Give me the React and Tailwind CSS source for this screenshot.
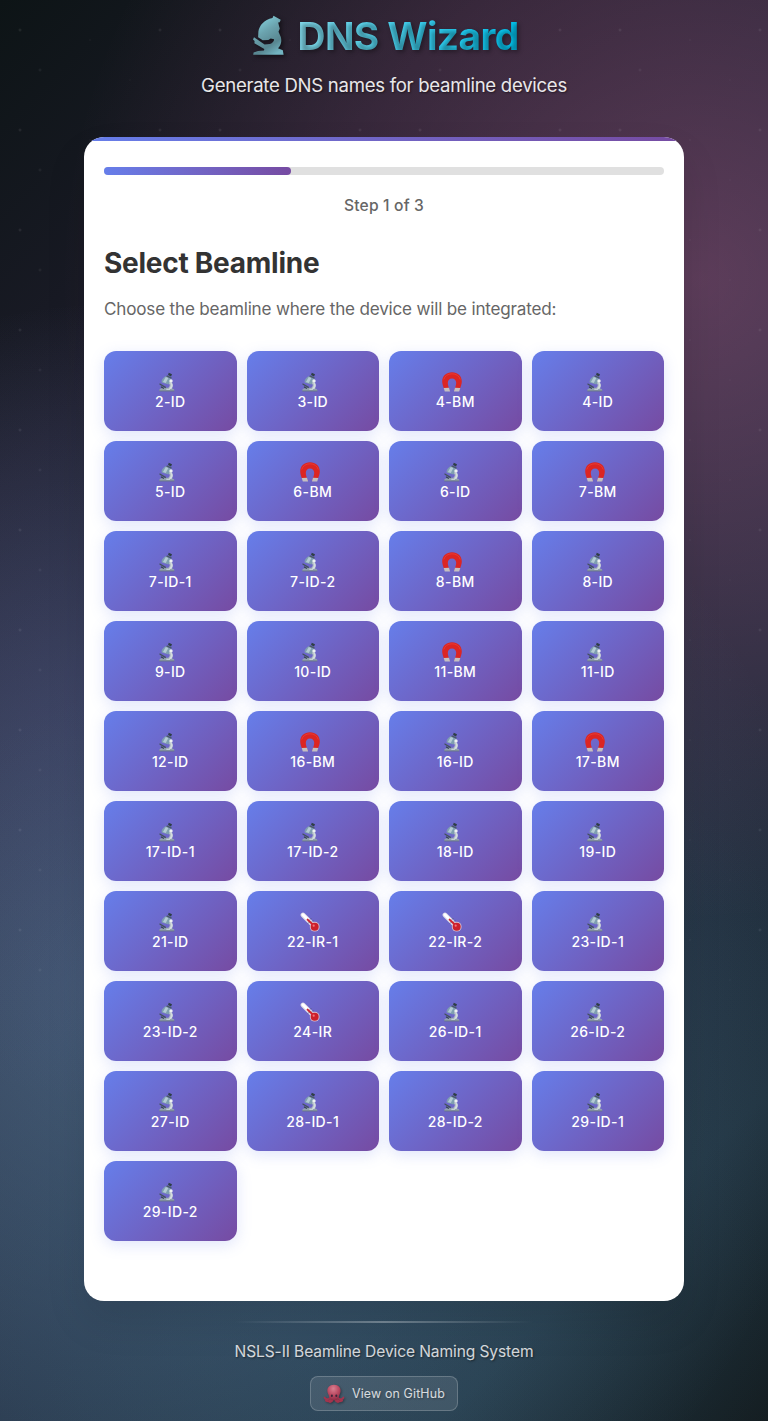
import React from "react";

const BEAMLINES = [
  "2-ID", "3-ID", "4-BM", "4-ID", "5-ID", "6-BM", "6-ID", "7-BM", "7-ID-1", "7-ID-2", "8-BM", "8-ID",
  "9-ID", "10-ID", "11-BM", "11-ID", "12-ID", "16-BM", "16-ID", "17-BM", "17-ID-1", "17-ID-2", "18-ID", "19-ID",
  "21-ID", "22-IR-1", "22-IR-2", "23-ID-1", "23-ID-2", "24-IR", "26-ID-1", "26-ID-2", "27-ID", "28-ID-1", "28-ID-2", "29-ID-1",
  "29-ID-2",
];

function Microscope() {
  return (
    <svg viewBox="0 0 20 20" className="block size-5">
      <path d="M11.500 8.500c4.400 1 5.600 5 2.200 8.600l-3.700-.2c2.800-1.600 3.800-4.400 1.500-6z" fill="#b4c0c6" />
      <path d="M2.600 17l3.600-1.200h8l3 1.600v1.500H2.400z" fill="#93a2b0" />
      <path d="M2.300 18.500h15v.9h-15z" fill="#687785" />
      <path d="M2.700 11.200l6.500 3.800-.8 1.300-6-3.800z" fill="#43535c" />
      <path d="M4 14.300l3.200 1.700-.5.900-2.800-1.500z" fill="#35444c" />
      <path d="M8.700 4.200l5.400 2.500-2.600 5.800-6.800-2c-.6-2.600 1.400-5 4-6.300z" fill="#7f9fb1" />
      <path d="M8.800 5l2.500 1.100-2.500 5-2.900-1z" fill="#b4cbd4" />
      <path d="M10 3.200l4.800 2.200-.6 1.300-4.900-2.200z" fill="#4b5c64" />
      <path d="M11.800.7l3.200 1.500-1 2.300-3-1.500z" fill="#2e3e44" />
      <circle cx="14" cy="8.900" r="1.700" fill="#eef2f3" />
      <path d="M14.300 10.400c2.300 2 1.700 4.900-.2 6.600l-2.300-.3c2.200-1.700 2.900-3.900 1.500-5.700z" fill="#d4dde0" />
      <path d="M9.500 16.700H13v1H9.200z" fill="#d3dce0" />
    </svg>
  );
}

function Magnet() {
  return (
    <svg viewBox="0 0 20 20" className="block size-5">
      <path d="M3.300 19C1 15 .2 11.500.2 9.400.200 4 4.400.3 10 .3s9.800 3.700 9.800 9.100c0 2.100-.8 5.600-3.100 9.600h-4.600c1.300-3.500 2.100-6 2.100-8.200 0-2.800-1.700-4.400-4.200-4.400s-4.200 1.600-4.200 4.400c0 2.200.8 4.700 2.100 8.200z" fill="#dc2523" />
      <path d="M1.700 7.500C2.700 4 5.800 1.800 10 1.800s7.300 2.200 8.300 5.700" fill="none" stroke="#e83a32" strokeWidth="1" />
      <path d="M1.700 16l5.300-.3 1 3.300-.1.600H2.800zM18.300 16l-5.300-.3-1 3.300.1.600h5.100z" fill="#c3bfc2" />
    </svg>
  );
}

function Thermometer() {
  return (
    <svg viewBox="0 0 20 20" className="block size-5">
      <path d="M3 3l10.500 10.500" stroke="#dedae6" strokeWidth="4.700" strokeLinecap="round" />
      <path d="M3 2.800l5 5" stroke="#fff" strokeWidth="3" strokeLinecap="round" />
      <circle cx="14.700" cy="14.700" r="4.900" fill="#d5bfd0" />
      <circle cx="14.700" cy="14.700" r="4" fill="#cb202c" />
      <path d="M7.600 7.600l7.500 7.200" stroke="#d1202c" strokeWidth="2" strokeLinecap="round" />
      <path d="M8 11.500l1.200-1.200M10 7.500l1.200-1.200M12 9.600l1.200-1.200" stroke="#55516f" strokeWidth=".9" />
      <circle cx="13.700" cy="13.700" r="1.100" fill="#f0757a" />
    </svg>
  );
}

function Octopus() {
  return (
    <svg viewBox="0 0 20 20" className="block size-5 overflow-visible drop-shadow-[1px_1px_1px_rgba(0,0,0,0.35)]">
      <defs>
        <radialGradient id="head" cx="45%" cy="25%" r="75%">
          <stop offset="0" stopColor="#d87f90" />
          <stop offset=".55" stopColor="#bb4a62" />
          <stop offset="1" stopColor="#8d2d46" />
        </radialGradient>
      </defs>
      <g fill="none" stroke="#a3344d" strokeWidth="1.900" strokeLinecap="round">
        <path d="M6 14c-1.500 1.800-4.500 1.800-5.400-.4M7 15.500c-1 1.500-3.300 1.900-5.100 1.200M8.500 15.500c0 1.600-1.300 2.600-2.900 2.400M14 14c1.500 1.800 4.500 1.800 5.400-.4M13 15.500c1 1.500 3.300 1.900 5.100 1.200M11.500 15.500c0 1.600 1.300 2.600 2.900 2.400" />
      </g>
      <path d="M10 .8c4.600 0 7 3 6.600 6.600-.2 2.100-1.600 3.500-1.900 6.100-.2 2-2.200 2.800-4.700 2.800s-4.500-.8-4.700-2.800c-.3-2.600-1.700-4-1.900-6.100C3 3.800 5.400.8 10 .8z" fill="url(#head)" />
      <ellipse cx="7.900" cy="11.800" rx="1" ry="1.300" fill="#39263a" />
      <ellipse cx="12.300" cy="11.800" rx="1" ry="1.300" fill="#39263a" />
    </svg>
  );
}

function TitleMicroscope() {
  return (
    <svg viewBox="0 0 32 42" className="block h-[42px] w-8 overflow-visible drop-shadow-[2px_2px_2px_rgba(0,0,0,0.5)]">
      <defs>
        <linearGradient id="scope" x1=".2" y1="0" x2=".7" y2="1">
          <stop offset="0" stopColor="#86d6e2" />
          <stop offset=".4" stopColor="#6ba3ae" />
          <stop offset=".75" stopColor="#588690" />
          <stop offset="1" stopColor="#72b4c1" />
        </linearGradient>
      </defs>
      <path
        d="M20.500 3l1-2.200 7.200 4-1 2.400-1.500.4L27 11l.8 2.500-1.300 3.300 2.300 5.200c1.300 4.600 0 8.600-2.800 11.200l4.800 2 .8 4.600H1.200l.4-2.200 4.400-1.700 6-.5.300-1.300L2.400 28.200l.2-2.100L1 24.600l1-2.400 10.600 7.400 5.400-.6c2.400-.9 4.200-2.500 4.100-4.700l-3.400-.9-2.300 1.500-5.700.3-4.600-3 .3-5.600c1-6 5.500-12 14.100-13.600z"
        fill="url(#scope)"
      />
    </svg>
  );
}

function BeamlineIcon({ name }) {
  if (name.includes("BM")) return <Magnet />;
  if (name.includes("IR")) return <Thermometer />;
  return <Microscope />;
}

export default function App() {
  return (
    <div className="relative h-[1421px] w-full overflow-hidden bg-[radial-gradient(circle_600px_at_300px_1250px,rgba(60,130,160,0.2),transparent),radial-gradient(circle_400px_at_100px_700px,rgba(110,100,190,0.16),rgba(110,100,190,0)),radial-gradient(circle_700px_at_134px_1000px,rgba(120,150,190,0.44),rgba(120,150,190,0)),radial-gradient(circle_640px_at_700px_280px,rgba(255,125,188,0.28),rgba(255,125,188,0)),linear-gradient(135deg,#0d1416_0%,#1c1c29_22%,#1f2637_50%,#1e2838_65%,#1f303c_85%,#131a1d_100%)] font-['Inter',sans-serif]">
      <div className="absolute inset-x-0 top-0 h-[1024px] bg-[radial-gradient(2px_2px_at_20px_30px,rgba(255,255,255,0.11),transparent),radial-gradient(2px_2px_at_40px_70px,rgba(255,255,255,0.08),transparent),radial-gradient(1px_1px_at_90px_40px,rgba(255,255,255,0.08),transparent),radial-gradient(1px_1px_at_130px_80px,rgba(255,255,255,0.06),transparent),radial-gradient(2px_2px_at_160px_30px,rgba(255,255,255,0.1),transparent)] bg-size-[200px_100px]" />
      <div className="relative flex h-full flex-col items-center">
        <header className="flex h-[137px] flex-col items-center pt-3">
          <h1 className="flex h-12 items-center gap-[13px] pl-[3px]">
            <TitleMicroscope />
            <span className="bg-[linear-gradient(90deg,#86dff0,#00c8f4)] bg-clip-text text-[38.8px] leading-12 font-bold tracking-[-0.6px] text-transparent [text-shadow:2px_2px_4px_rgba(0,0,0,0.35)]">
              DNS Wizard
            </span>
          </h1>
          <p className="mt-3 text-[18.6px] leading-[27px] tracking-[-0.29px] text-white/90 [text-shadow:1px_1px_2px_rgba(0,0,0,0.5)]">
            Generate DNS names for beamline devices
          </p>
        </header>

        <main className="h-[1164px] w-[600px] shrink-0 overflow-hidden rounded-[20px] bg-white shadow-[0_20px_40px_rgba(0,0,0,0.1)]">
          <div className="h-1 bg-linear-to-r from-[#667eea] to-[#764ba2]" />
          <div className="px-5 pt-[26px]">
            <div className="h-2 rounded bg-[#e0e0e0]">
              <div className="h-2 w-1/3 rounded bg-linear-to-r from-[#667eea] to-[#764ba2]" />
            </div>
            <p className="mt-[19px] text-center text-[15.6px] leading-6 font-medium tracking-[0.18px] text-[#666]">
              Step 1 of 3
            </p>
            <h2 className="mt-[27px] text-[28px] leading-[36px] font-bold tracking-[-0.26px] text-[#333]">Select Beamline</h2>
            <p className="mt-[14px] text-[17.1px] leading-[28px] tracking-[-0.19px] text-[#666]">
              Choose the beamline where the device will be integrated:
            </p>
            <div className="mt-[28px] grid grid-cols-4 gap-2.5">
              {BEAMLINES.map((name) => (
                <button
                  key={name}
                  className="flex h-20 flex-col items-center rounded-xl bg-[linear-gradient(135deg,#667eea_0%,#764ba2_100%)] pt-[21px] text-[14px] leading-5 font-medium tracking-[0.38px] text-white shadow-[0_4px_15px_rgba(102,126,234,0.2)]"
                >
                  <span className="mr-[6px]">
                    <BeamlineIcon name={name} />
                  </span>
                  <span>{name}</span>
                </button>
              ))}
            </div>
          </div>
        </main>

        <footer className="flex flex-col items-center pt-5">
          <div className="h-0.5 w-[300px] bg-[linear-gradient(90deg,transparent,rgba(255,255,255,0.3),transparent)]" />
          <p className="mt-[17px] text-[15.6px] leading-6 tracking-[-0.12px] text-white/80 [text-shadow:1px_1px_2px_rgba(0,0,0,0.5)]">
            NSLS-II Beamline Device Naming System
          </p>
          <a className="mt-3 flex h-[35px] w-[148px] items-center gap-2 rounded-lg border border-white/20 bg-white/10 pl-[13px] text-[12.4px] tracking-[0.15px] text-white/80 [text-shadow:1px_1px_2px_rgba(0,0,0,0.3)]">
            <Octopus />
            <span className="pt-0.5">View on GitHub</span>
          </a>
        </footer>
      </div>
    </div>
  );
}
